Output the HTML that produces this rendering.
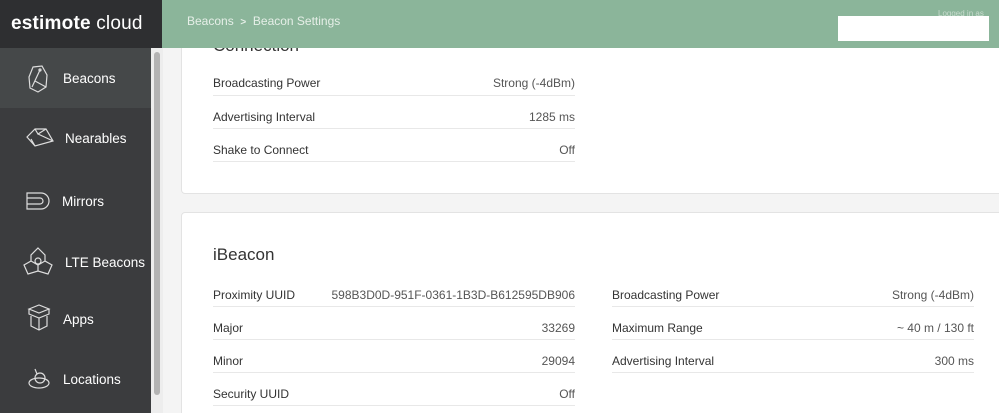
<!DOCTYPE html>
<html><head><meta charset="utf-8"><style>
*{margin:0;padding:0;box-sizing:border-box}
html,body{width:999px;height:413px;overflow:hidden}
body{background:#f4f4f4;font-family:"Liberation Sans",sans-serif;position:relative}
.hl{position:absolute;z-index:10;left:0;top:0;width:162px;height:48px;background:#2e2f31;color:#fff;font-size:19px;padding:13px 0 0 11px;letter-spacing:0.2px}
.hl b{font-weight:bold}
.hr{position:absolute;z-index:10;left:162px;top:0;right:0;height:48px;background:#8bb59a}
.bc{position:absolute;left:25px;top:14px;color:#e6efe8;font-size:12px}
.box{position:absolute;z-index:12;left:838px;top:16px;width:151px;height:25px;background:#fff}
.lg{position:absolute;z-index:11;left:938px;top:9px;font-size:8px;color:#c9dccf}
.sb{position:absolute;left:0;top:48px;width:151px;bottom:0;background:#3b3c3e}
.act{position:absolute;left:0;top:48px;width:151px;height:60px;background:#454849}
.track{position:absolute;left:151px;top:48px;width:12px;bottom:0;background:#ededed}
.thumb{position:absolute;left:154px;top:52px;width:6px;height:343px;background:#b3b3b3;border-radius:3px}
.it{position:absolute;color:#fff;font-size:13.5px}
.ic{position:absolute}
.card{position:absolute;left:181px;right:-5px;background:#fff;border:1px solid #e3e3e3;border-radius:4px}
.row{position:absolute;height:33px;border-bottom:1px solid #e8e8e8;font-size:12px;color:#333}
.row span{position:absolute;top:0}
.row .v{right:0;color:#555}
h2{position:absolute;font-weight:normal;font-size:17px;color:#333}
</style></head><body>
<div class="hr"><div class="bc">Beacons &nbsp;<b style="font-size:10px">&gt;</b>&nbsp; Beacon Settings</div></div>
<div class="lg">Logged in as</div>
<div class="box"></div>
<div class="hl"><b>estimote</b> cloud</div>
<div class="sb"></div><div class="act"></div>
<div class="track"></div><div class="thumb"></div>

<svg class="ic" style="left:27px;top:65px" width="22" height="28" viewBox="0 0 22 28" fill="none" stroke="#ddd" stroke-width="1.2"><path d="M6 2L15 1L20 10L19 22L11 27L3 23L2 12Z M13 5L5 22 M8 16L19 22"/><circle cx="13" cy="5" r="1"/></svg>
<div class="it" style="left:63px;top:71px">Beacons</div>
<svg class="ic" style="left:26px;top:128px" width="28" height="20" viewBox="0 0 28 20" fill="none" stroke="#ddd" stroke-width="1.2"><path d="M9 1L20 1L27 13L9 18L1 9Z M9 1L12 6L20 1 M12 6L27 13 M9 18L5 11"/></svg>
<div class="it" style="left:65px;top:131px">Nearables</div>
<svg class="ic" style="left:26px;top:191px" width="24" height="20" viewBox="0 0 24 20" fill="none" stroke="#ddd" stroke-width="1.2"><path d="M1 2H15A8 8 0 0 1 15 18H1V13H14A3 3 0 0 0 14 7H1Z M1 7V13"/></svg>
<div class="it" style="left:62px;top:194px">Mirrors</div>
<svg class="ic" style="left:23px;top:247px" width="30" height="30" viewBox="0 0 30 30" fill="none" stroke="#ddd" stroke-width="1.2"><path d="M15 1L22 8V14L29 18L25 27L15 24L5 27L1 18L8 14V8Z M8 14L15 18L22 14 M15 18V24"/><circle cx="15" cy="14" r="3"/></svg>
<div class="it" style="left:65px;top:255px">LTE Beacons</div>
<svg class="ic" style="left:27px;top:304px" width="24" height="27" viewBox="0 0 24 27" fill="none" stroke="#ddd" stroke-width="1.2"><path d="M2 5L12 1L22 5L12 9Z M2 5V10L12 14L22 10V5 M4 12V22L12 26L20 22V12 M12 14V26"/></svg>
<div class="it" style="left:63px;top:312px">Apps</div>
<svg class="ic" style="left:27px;top:368px" width="24" height="22" viewBox="0 0 24 22" fill="none" stroke="#ddd" stroke-width="1.2"><ellipse cx="12" cy="15" rx="10" ry="5"/><circle cx="13" cy="10" r="5"/><path d="M10 6L8 1"/></svg>
<div class="it" style="left:63px;top:372px">Locations</div>

<div class="card" style="top:-10px;height:204px"></div>
<h2 style="left:213px;top:36px">Connection</h2>
<div class="row" style="left:213px;width:362px;top:63px;"><span style="top:13px">Broadcasting Power</span><span class="v" style="top:13px">Strong (-4dBm)</span></div>
<div class="row" style="left:213px;width:362px;top:96px;"><span style="top:14px">Advertising Interval</span><span class="v" style="top:14px">1285 ms</span></div>
<div class="row" style="left:213px;width:362px;top:129px;"><span style="top:14px">Shake to Connect</span><span class="v" style="top:14px">Off</span></div>

<div class="card" style="top:212px;height:220px"></div>
<h2 style="left:213px;top:245px">iBeacon</h2>
<div class="row" style="left:213px;width:362px;top:274px"><span style="top:14px">Proximity UUID</span><span class="v" style="top:14px">598B3D0D-951F-0361-1B3D-B612595DB906</span></div>
<div class="row" style="left:213px;width:362px;top:307px"><span style="top:14px">Major</span><span class="v" style="top:14px">33269</span></div>
<div class="row" style="left:213px;width:362px;top:340px"><span style="top:14px">Minor</span><span class="v" style="top:14px">29094</span></div>
<div class="row" style="left:213px;width:362px;top:373px"><span style="top:14px">Security UUID</span><span class="v" style="top:14px">Off</span></div>
<div class="row" style="left:612px;width:362px;top:274px"><span style="top:14px">Broadcasting Power</span><span class="v" style="top:14px">Strong (-4dBm)</span></div>
<div class="row" style="left:612px;width:362px;top:307px"><span style="top:14px">Maximum Range</span><span class="v" style="top:14px">~ 40 m / 130 ft</span></div>
<div class="row" style="left:612px;width:362px;top:340px"><span style="top:14px">Advertising Interval</span><span class="v" style="top:14px">300 ms</span></div>
</body></html>
